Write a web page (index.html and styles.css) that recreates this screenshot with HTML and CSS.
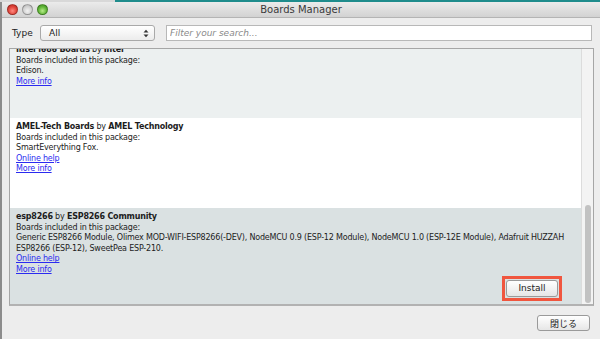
FILE: index.html
```html
<!DOCTYPE html>
<html>
<head>
    <title>Boards Manager</title>
    <link rel="stylesheet" href="styles.css">
</head>
    <body>
        <div class="backdrop"></div>
        <div class="window">
            <div class="titlebar">
                <div class="lights">
                    <span class="light red"></span>
                    <span class="light grey"></span>
                    <span class="light green"></span>
                </div>
                <div class="title">Boards Manager</div>
            </div>

            <div class="toolbar">
                <label class="type-label">Type</label>
                <div class="select">
                    <span>All</span>
                    <svg class="updown" width="6" height="9" viewBox="0 0 6 9">
                        <path d="M0.5 3.5 L3 0.8 L5.5 3.5 Z" fill="#333"/>
                        <path d="M0.5 5.5 L3 8.2 L5.5 5.5 Z" fill="#333"/>
                    </svg>
                </div>
                <input class="search" type="text" placeholder="Filter your search...">
            </div>

            <div class="list">
                <div class="entries">
                    <div class="entry alt first">
                        <div><b>Intel i686 Boards</b> by <b>Intel</b></div>
                        <div>Boards included in this package:</div>
                        <div>Edison.</div>
                        <div><a href="#">More info</a></div>
                    </div>
                    <div class="entry plain">
                        <div><b>AMEL-Tech Boards</b> by <b>AMEL Technology</b></div>
                        <div>Boards included in this package:</div>
                        <div>SmartEverything Fox.</div>
                        <div><a href="#">Online help</a></div>
                        <div><a href="#">More info</a></div>
                    </div>
                    <div class="entry selected">
                        <div><b>esp8266</b> by <b>ESP8266 Community</b></div>
                        <div>Boards included in this package:</div>
                        <div class="boards">Generic ESP8266 Module, Olimex MOD-WIFI-ESP8266(-DEV), NodeMCU 0.9 (ESP-12 Module), NodeMCU 1.0 (ESP-12E Module), Adafruit HUZZAH<br>ESP8266 (ESP-12), SweetPea ESP-210.</div>
                        <div><a href="#">Online help</a></div>
                        <div><a href="#">More info</a></div>
                        <div class="actions">
                            <span class="mark">
                                <button class="btn install">Install</button>
                            </span>
                        </div>
                    </div>
                </div>
                <div class="scrollbar">
                    <div class="thumb"></div>
                </div>
            </div>

            <div class="footer">
                <button class="btn close">閉じる</button>
            </div>
        </div>
    </body>
</html>
```

FILE: styles.css
```css
body {
    margin: 0;
    width: 600px;
    height: 339px;
    overflow: hidden;
    background-color: #ededed;
    font-family: "DejaVu Sans", "Noto Sans CJK JP", sans-serif;
    font-size: 8px;
    color: #1c1c1c;
}
.backdrop {
    height: 2px;
    background: linear-gradient(to right, #d8d8d8 0, #d8d8d8 115px, #1f8c8c 115px, #1f8c8c 600px);
}
.window {
    height: 337px;
    border-left: 2px solid #8c8c8c;
    display: flex;
    flex-direction: column;
}
.titlebar {
    height: 15px;
    display: flex;
    align-items: center;
    position: relative;
    background: linear-gradient(#ebebeb, #d2d2d2);
    border-bottom: 1px solid #b4b4b4;
}
.lights {
    display: flex;
    gap: 4px;
    padding-left: 5px;
}
.light {
    width: 11px;
    height: 11px;
    border-radius: 50%;
    box-sizing: border-box;
    border: 1px solid rgba(0, 0, 0, 0.25);
}
.light.red {
    background: radial-gradient(circle at 50% 65%, #ff8a80 0, #e0443a 55%, #b8251d 100%);
}
.light.grey {
    background: radial-gradient(circle at 50% 65%, #f2f2f2 0, #cfcfcf 60%, #a8a8a8 100%);
}
.light.green {
    background: radial-gradient(circle at 50% 65%, #b8ec8a 0, #5fb536 55%, #3a8a1c 100%);
}
.title {
    position: absolute;
    left: 0;
    right: 0;
    text-align: center;
    font-size: 10px;
    color: #3a3a3a;
}
.toolbar {
    display: flex;
    align-items: center;
    height: 30px;
    padding: 0 8px 0 10px;
}
.type-label {
    font-size: 9px;
    width: 28px;
}
.select {
    width: 115px;
    height: 16px;
    box-sizing: border-box;
    border: 1px solid #a9a9a9;
    border-radius: 3px;
    background: linear-gradient(#ffffff, #ececec);
    display: flex;
    align-items: center;
    justify-content: space-between;
    padding: 0 5px 0 8px;
    font-size: 9px;
}
.search {
    flex: 1;
    height: 16px;
    margin-left: 11px;
    box-sizing: border-box;
    border: 1px solid #b8b8b8;
    background-color: #fff;
    padding: 0 3px;
    font-family: "DejaVu Sans", sans-serif;
    font-size: 9px;
}
.search::placeholder {
    color: #8a8a8a;
    font-style: italic;
}
.list {
    margin: 0 6px 0 7px;
    height: 258px;
    box-sizing: border-box;
    border: 1px solid #a6a6a6;
    border-bottom: 2px solid #b2b2b2;
    display: flex;
    overflow: hidden;
}
.entries {
    flex: 1;
    overflow: hidden;
}
.entry {
    box-sizing: border-box;
    padding: 4px 6px;
    line-height: 10.6px;
    letter-spacing: -0.2px;
}
.entry a {
    color: #2b2bf0;
}
.boards {
    white-space: nowrap;
}
.alt {
    background-color: #ecf0f0;
}
.first {
    height: 77px;
    margin-top: -8px;
}
.plain {
    background-color: #fff;
    height: 90px;
}
.selected {
    background-color: #dae1e2;
    height: 97px;
}
.actions {
    display: flex;
    justify-content: flex-end;
    padding-right: 13px;
}
.mark {
    display: flex;
    padding: 1px;
    border: 3px solid #f0563f;
}
.btn {
    font-family: "DejaVu Sans", "Noto Sans CJK JP", sans-serif;
    font-size: 9px;
    letter-spacing: 0;
    color: #222;
    height: 17px;
    padding: 0;
    border: 1px solid #9a9a9a;
    border-radius: 3px;
    background: linear-gradient(#ffffff, #e6e6e6);
}
.install {
    width: 52px;
}
.scrollbar {
    width: 11px;
    background-color: #f3f3f3;
    border-left: 1px solid #dcdcdc;
    display: flex;
    flex-direction: column;
    justify-content: flex-end;
    align-items: center;
}
.thumb {
    width: 6px;
    height: 98px;
    margin-bottom: 1px;
    border-radius: 3px;
    background-color: #c2c2c2;
}
.footer {
    display: flex;
    justify-content: flex-end;
    padding: 9px 10px 0 0;
}
.close {
    width: 53px;
    height: 16px;
}
```
